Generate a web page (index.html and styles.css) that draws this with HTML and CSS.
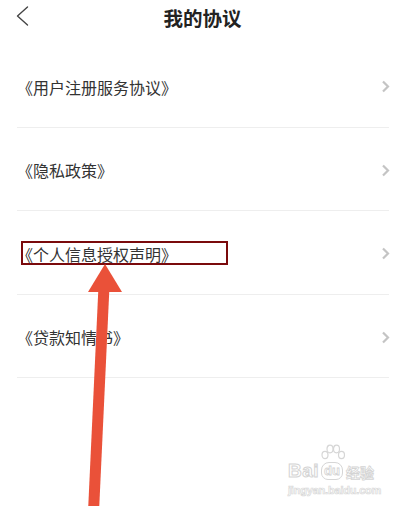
FILE: index.html
```html
<!DOCTYPE html>
<html lang="zh-CN">
<head>
<meta charset="utf-8">
<title>我的协议</title>
<link rel="stylesheet" href="styles.css">
</head>
<body>
<div class="page">
  <header class="nav">
    <div class="back">
      <svg width="13" height="20" viewBox="0 0 13 20"><polyline points="11.5,1 1.5,10 11.5,19" fill="none" stroke="#444" stroke-width="1.4" stroke-linecap="round" stroke-linejoin="round"/></svg>
    </div>
    <h1 class="title">我的协议</h1>
    <div></div>
  </header>
  <ul class="list">
    <li class="item"><span class="label">《用户注册服务协议》</span><svg class="chev" width="9" height="13" viewBox="0 0 9 13"><polyline points="2,1.5 7,6.5 2,11.5" fill="none" stroke="#c4c4c4" stroke-width="2.2"/></svg></li>
    <li class="item"><span class="label">《隐私政策》</span><svg class="chev" width="9" height="13" viewBox="0 0 9 13"><polyline points="2,1.5 7,6.5 2,11.5" fill="none" stroke="#c4c4c4" stroke-width="2.2"/></svg></li>
    <li class="item"><span class="label">《个人信息授权声明》</span><svg class="chev" width="9" height="13" viewBox="0 0 9 13"><polyline points="2,1.5 7,6.5 2,11.5" fill="none" stroke="#c4c4c4" stroke-width="2.2"/></svg></li>
    <li class="item"><span class="label">《贷款知情书》</span><svg class="chev" width="9" height="13" viewBox="0 0 9 13"><polyline points="2,1.5 7,6.5 2,11.5" fill="none" stroke="#c4c4c4" stroke-width="2.2"/></svg></li>
  </ul>

  <div class="highlight"></div>

  <svg class="arrow" width="405" height="506" viewBox="0 0 405 506">
    <line x1="104" y1="286" x2="93.5" y2="512" stroke="#ea5139" stroke-width="11"/>
    <polygon points="105,264 122,292 88,292" fill="#ea5139"/>
  </svg>

  <div class="watermark">
    <div class="wm-logo">
      <span class="wm-bai">Bai</span>
      <span class="wm-du">
        <svg class="paw" width="26" height="20" viewBox="0 0 26 20">
          <g fill="#fff" stroke="#d6d6d6" stroke-width="1.2">
            <ellipse cx="5" cy="11" rx="3" ry="3.6"/>
            <ellipse cx="10" cy="5" rx="3" ry="3.8"/>
            <ellipse cx="16.5" cy="5" rx="3" ry="3.8"/>
            <ellipse cx="21.5" cy="11" rx="3" ry="3.6"/>
          </g>
        </svg>
        du
      </span>
      <span class="wm-jy">经验</span>
    </div>
    <div class="wm-url">jingyan.baidu.com</div>
  </div>
</div>
</body>
</html>
```

FILE: styles.css
```css
html, body {
  margin: 0;
  padding: 0;
  background: #fff;
}

.page {
  position: relative;
  width: 405px;
  height: 506px;
  overflow: hidden;
  font-family: "Noto Sans CJK SC", "Noto Sans", sans-serif;
  color: #333;
}

.nav {
  display: grid;
  grid-template-columns: 1fr auto 1fr;
  height: 44px;
  align-items: start;
}

.back {
  padding: 6px 0 0 16px;
  line-height: 0;
}

.title {
  margin: 0;
  font-size: 19.5px;
  font-weight: 700;
  line-height: 36px;
  color: #222;
}

.list {
  list-style: none;
  margin: 0 16px 0 17px;
  padding: 0;
}

.item {
  display: flex;
  align-items: center;
  justify-content: space-between;
  padding-top: 3px;
  box-sizing: border-box;
  height: 83.5px;
  border-bottom: 1px solid #eeeeee;
}

.label {
  font-size: 16px;
  line-height: 22px;
  color: #333;
}

.chev {
  display: block;
  margin-right: -1px;
}

.highlight {
  position: absolute;
  left: 21px;
  top: 241px;
  width: 203px;
  height: 20px;
  border: 2.5px solid #7a0a0c;
}

.arrow {
  position: absolute;
  left: 0;
  top: 0;
  pointer-events: none;
}

.watermark {
  position: absolute;
  left: 288px;
  top: 449px;
  width: 92px;
  font-family: "Liberation Sans", Arial, sans-serif;
  font-weight: 700;
  color: #fff;
}

.wm-logo {
  display: flex;
  align-items: flex-end;
  height: 31px;
}

.wm-bai {
  font-size: 19px;
  line-height: 19px;
  -webkit-text-stroke: 1px #d4d4d4;
  letter-spacing: 0.5px;
}

.wm-du {
  position: relative;
  font-size: 13px;
  line-height: 15px;
  margin-left: 2px;
  padding: 0 2px 1px;
  border: 1.2px solid #d6d6d6;
  border-radius: 8px 8px 7px 7px;
  -webkit-text-stroke: 0.8px #d4d4d4;
}

.paw {
  position: absolute;
  left: -2px;
  top: -19px;
}

.wm-jy {
  font-family: "Noto Sans CJK SC", sans-serif;
  font-size: 14px;
  line-height: 16px;
  margin-left: 3px;
  -webkit-text-stroke: 0.8px #d4d4d4;
}

.wm-url {
  margin-top: 4px;
  font-size: 11px;
  line-height: 12px;
  letter-spacing: -0.2px;
  -webkit-text-stroke: 0.7px #d8d8d8;
}
```
